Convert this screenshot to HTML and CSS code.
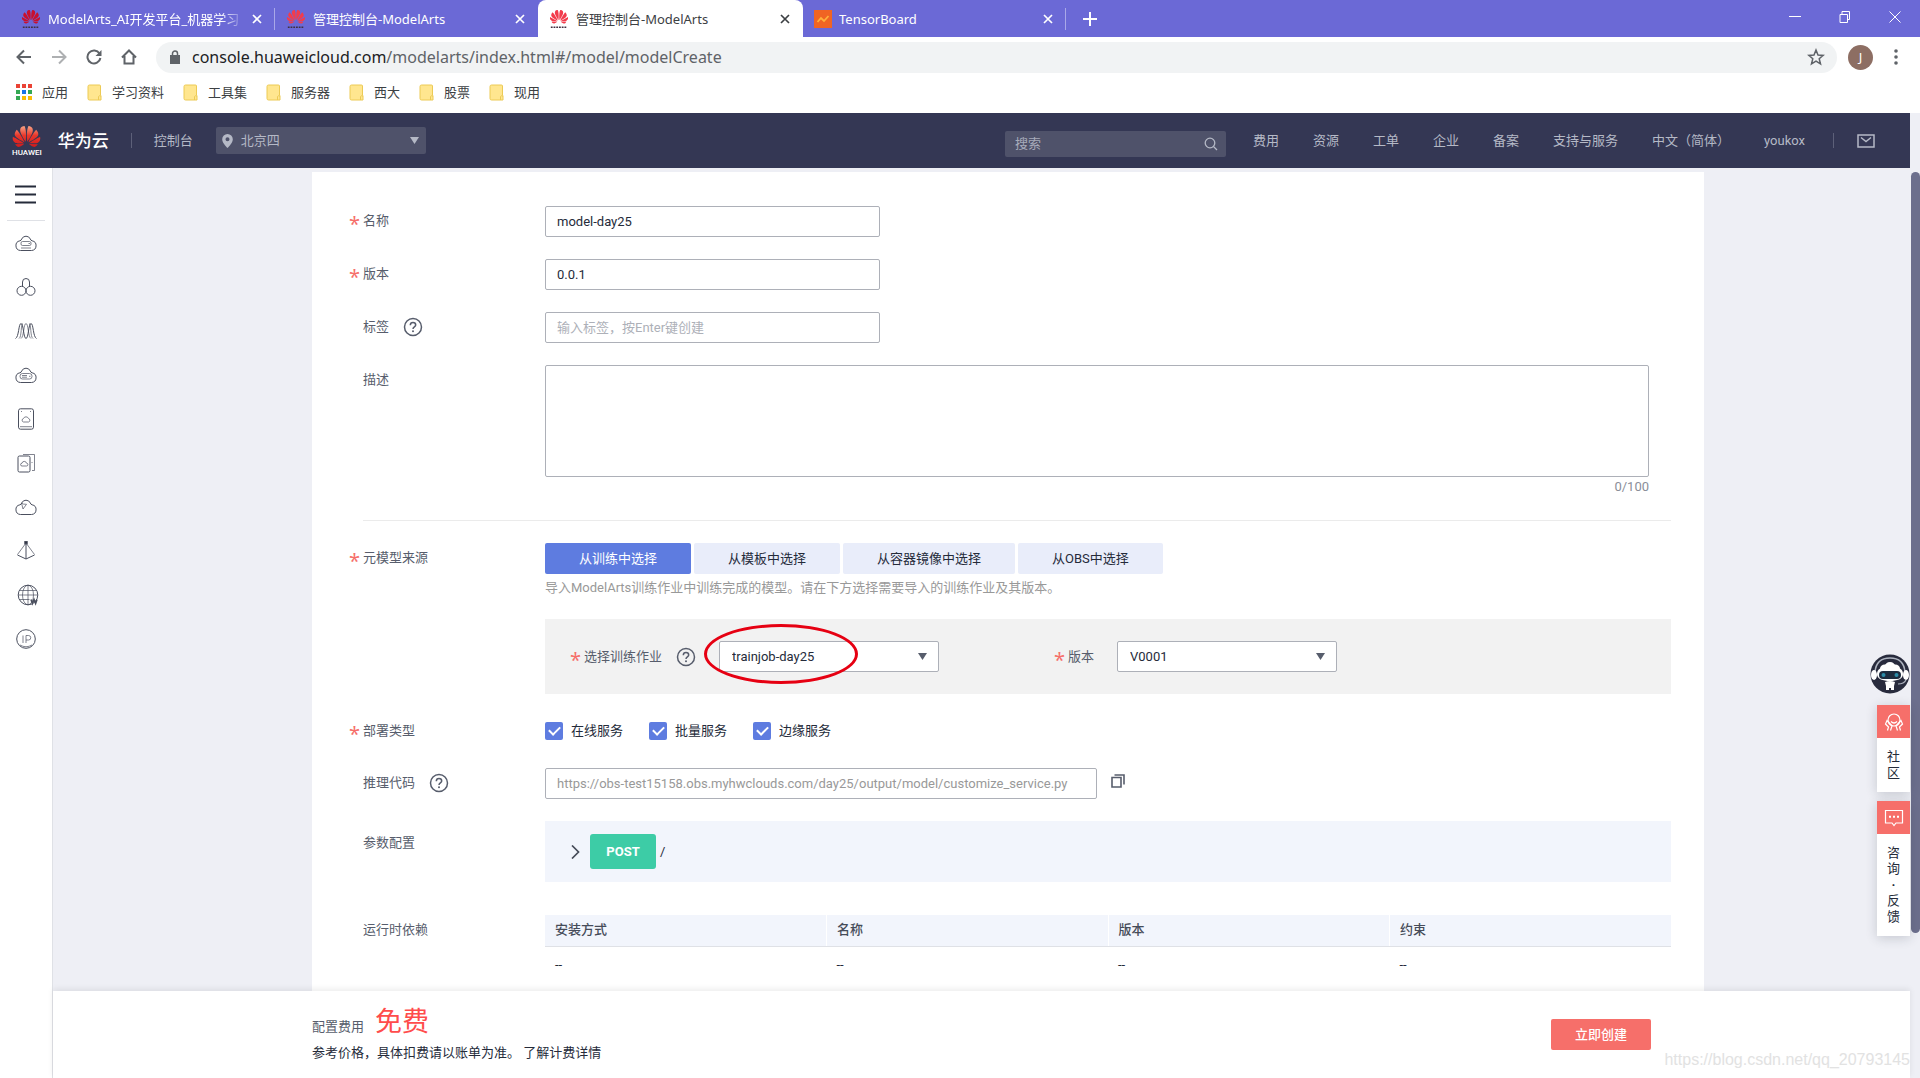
FILE: index.html
```html
<!DOCTYPE html>
<html lang="zh-CN">
<head>
<meta charset="utf-8">
<title>管理控制台-ModelArts</title>
<link rel="stylesheet" href="styles.css">
</head>
<body>
<svg class="sprite" aria-hidden="true">
  <defs>
    <linearGradient id="petal" x1="0" y1="0" x2="0" y2="1"><stop offset="0" stop-color="#f9a384"/><stop offset=".45" stop-color="#e8372b"/><stop offset="1" stop-color="#d41a1c"/></linearGradient>
  </defs>
  <symbol id="flower" viewBox="0 2 24 20"><path d="M3.67 6.14S1.82 7.91 1.72 9.78v.35c.08 1.51 1.22 2.4 1.22 2.4 1.83 1.79 6.26 4.04 7.3 4.55 0 0 .06.03.1-.01l.02-.04v-.04C7.52 10.8 3.67 6.14 3.67 6.14zM9.65 18.6c-.02-.08-.1-.08-.1-.08l-7.38.26c.8 1.43 2.15 2.53 3.56 2.2.96-.25 3.16-1.78 3.88-2.3.06-.05.04-.09.04-.09zm.08-.78C6.49 15.63.21 12.28.21 12.28c-.15.46-.2.9-.21 1.3v.07c0 1.07.4 1.82.4 1.82.8 1.69 2.34 2.2 2.34 2.2.7.3 1.4.31 1.4.31.12.02 4.4 0 5.54 0 .05 0 .08-.05.08-.05v-.06c0-.03-.03-.05-.03-.05zM9.06 3.19a3.42 3.42 0 00-2.57 3.15v.41c.03.6.16 1.05.16 1.05.66 2.9 3.86 7.65 4.55 8.65.05.05.1.03.1.03a.1.1 0 00.06-.1c1.06-10.6-1.11-13.42-1.11-13.42-.32.02-1.19.23-1.19.23zm8.3 2.27s-.49-1.8-2.44-2.28c0 0-.57-.14-1.17-.22 0 0-2.18 2.81-1.12 13.43.01.07.06.08.06.08.07.03.1-.03.1-.03.72-1.03 3.9-5.76 4.55-8.64 0 0 .36-1.4.02-2.34zm-2.92 13.07s-.07 0-.09.05c0 0-.01.07.03.1.7.51 2.85 2 3.88 2.3 0 0 .16.05.43.06h.14c.69-.02 1.9-.37 3-2.26l-7.4-.25zm7.83-8.41c.14-2.06-1.94-3.97-1.94-3.98 0 0-3.85 4.66-6.67 10.8 0 0-.03.08.02.13l.04.01h.06c1.06-.53 5.46-2.77 7.28-4.54 0 0 1.15-.93 1.21-2.42zm1.52 2.14s-6.28 3.37-9.52 5.55c0 0-.05.04-.03.11 0 0 .03.06.07.06 1.16 0 5.56 0 5.67-.02 0 0 .57-.02 1.27-.29 0 0 1.56-.5 2.37-2.27 0 0 .73-1.45.17-3.14z"/></symbol>
  <symbol id="favicon" viewBox="0 0 20 22"><use href="#flower" x="0" y="0" width="20" height="17"/><path d="M1 20h18" stroke="#403040" stroke-width="1.600" stroke-dasharray="2 1"/></symbol>
  <symbol id="cross" viewBox="0 0 10 10"><path d="M1 1l8 8M9 1l-8 8" stroke="currentColor" stroke-width="1.700" fill="none"/></symbol>
  <symbol id="folder" viewBox="0 0 15 17"><path d="M1 2.500a1.500 1.500 0 011.500-1.500h10a1 1 0 011 1v9.500h.5v4.500H2.500A1.500 1.500 0 011 14.500z" fill="#ffe68f" stroke="#ecca55"/><path d="M11.500 16v-3.500q1-1.500 2 0" fill="none" stroke="#ecca55"/></symbol>
  <symbol id="help" viewBox="0 0 20 20"><circle cx="10" cy="10" r="8.500" fill="none" stroke="#575d6c" stroke-width="1.500"/><path d="M7.300 8.200q0-2.700 2.700-2.700t2.700 2.400c0 1.900-2.700 1.900-2.700 4" fill="none" stroke="#575d6c" stroke-width="1.500"/><circle cx="10" cy="14.200" r="1" fill="#575d6c"/></symbol>
  <symbol id="cloud" viewBox="0 0 22 18"><path d="M5.500 16.500a4.900 4.900 0 01-.6-9.700C5.900 6.600 6.300 6 6.700 5a4.700 4.700 0 018.600 0c.4 1 .8 1.600 1.800 1.800a4.900 4.900 0 01-.6 9.700z"/></symbol>
</svg>

<div class="browser">
  <div class="tabstrip">
    <div class="tab tab-first">
      <svg class="fav fav-dark"><use href="#favicon"/></svg><span class="tab-title fade">ModelArts_AI开发平台_机器学习</span>
      <button class="tab-close" aria-label="关闭"><svg><use href="#cross"/></svg></button>
    </div>
    <div class="tab">
      <svg class="fav"><use href="#favicon"/></svg><span class="tab-title">管理控制台-ModelArts</span>
      <button class="tab-close" aria-label="关闭"><svg><use href="#cross"/></svg></button>
    </div>
    <div class="tab tab-active">
      <svg class="fav"><use href="#favicon"/></svg><span class="tab-title">管理控制台-ModelArts</span>
      <button class="tab-close" aria-label="关闭"><svg><use href="#cross"/></svg></button>
    </div>
    <div class="tab tab-last">
      <svg class="fav fav-board" viewBox="0 0 18 18"><path d="M0 0h18v18H0z" fill="#f06423"/><path d="M3.500 12l3.500-4 3 3 4.500-5" fill="none" stroke="#ffb03a" stroke-width="1.800"/></svg><span class="tab-title">TensorBoard</span>
      <button class="tab-close" aria-label="关闭"><svg><use href="#cross"/></svg></button>
    </div>
    <button class="new-tab" aria-label="新标签页"><svg viewBox="0 0 14 14"><path d="M7 0v14M0 7h14" stroke="#fff" stroke-width="2"/></svg></button>
    <div class="window-controls">
      <button aria-label="最小化"><svg viewBox="0 0 12 12"><path d="M0 5.500h12"/></svg></button>
      <button aria-label="还原"><svg viewBox="0 0 12 12"><path d="M1 3.500h7.500v8H1zM3 3.500v-3h7.500v8h-2"/></svg></button>
      <button aria-label="关闭窗口"><svg viewBox="0 0 12 12"><path d="M.5.500l11 11M11.500.500l-11 11"/></svg></button>
    </div>
  </div>
  <div class="toolbar">
    <button class="tool" aria-label="后退"><svg viewBox="0 0 16 16"><path d="M15 8H2M8 1.500L1.500 8 8 14.500" /></svg></button>
    <button class="tool off" aria-label="前进"><svg viewBox="0 0 16 16"><path d="M1 8h13M8 1.500L14.500 8 8 14.500"/></svg></button>
    <button class="tool" aria-label="刷新"><svg viewBox="0 0 16 16"><path d="M13.500 4.500A6.500 6.500 0 1014.400 9"/><path d="M15.500 1v6h-6z" fill="#5f6368" stroke="none"/></svg></button>
    <button class="tool" aria-label="主页"><svg viewBox="0 0 16 16"><path d="M1 8.500l7-7 7 7M3.500 7v7.500h9V7"/></svg></button>
    <label class="omnibox">
      <svg class="lock" viewBox="0 0 10 14"><path d="M0 5h10v9H0z" fill="#5f6368"/><path d="M2.500 5V3.500a2.500 2.500 0 015 0V5" fill="none" stroke="#5f6368" stroke-width="1.500"/></svg>
      <span class="url"><b>console.huaweicloud.com</b>/modelarts/index.html#/model/modelCreate</span>
      <svg class="star" viewBox="0 0 18 18"><path d="M9 2l2 5 5.200.4-4 3.400 1.300 5.200L9 13.200 4.500 16l1.300-5.200-4-3.400L7 7z" fill="none" stroke="#5f6368" stroke-width="1.500"/></svg>
    </label>
    <span class="avatar">J</span>
    <svg class="dots" viewBox="0 0 4 16" fill="#5f6368"><circle cx="2" cy="2" r="1.800"/><circle cx="2" cy="8" r="1.800"/><circle cx="2" cy="14" r="1.800"/></svg>
  </div>
  <nav class="bookmarks">
    <a href="#apps"><svg class="apps" viewBox="0 0 16 16"><path d="M0 0h4v4H0zM6 0h4v4H6zM12 0h4v4h-4z" fill="#ea4335"/><path d="M0 6h4v4H0zM12 6h4v4h-4zM0 12h4v4H0z" fill="#34a853"/><path d="M6 6h4v4H6z" fill="#1a73e8"/><path d="M6 12h4v4H6zM12 12h4v4h-4z" fill="#fbbc05"/></svg>应用</a>
    <a href="#b1"><svg class="folder"><use href="#folder"/></svg>学习资料</a>
    <a href="#b2"><svg class="folder"><use href="#folder"/></svg>工具集</a>
    <a href="#b3"><svg class="folder"><use href="#folder"/></svg>服务器</a>
    <a href="#b4"><svg class="folder"><use href="#folder"/></svg>西大</a>
    <a href="#b5"><svg class="folder"><use href="#folder"/></svg>股票</a>
    <a href="#b6"><svg class="folder"><use href="#folder"/></svg>现用</a>
  </nav>
</div>

<div class="viewport">
  <div class="page">
    <header class="topbar">
      <a class="brand" href="#home"><span class="logo"><svg class="logo-flower" fill="url(#petal)"><use href="#flower"/></svg><span class="logo-word">HUAWEI</span></span><span class="brand-name">华为云</span></a>
      <i class="bar"></i>
      <a class="console" href="#console">控制台</a>
      <div class="region">
        <svg class="pin" viewBox="0 0 11 14"><path fill-rule="evenodd" d="M5.500 0a5.300 5.300 0 015.300 5.300C10.800 8.500 7.500 12 5.500 14 3.500 12 .2 8.500.2 5.300A5.300 5.300 0 015.500 0zm0 3.300a2 2 0 100 4 2 2 0 000-4z"/></svg>
        <select aria-label="区域"><option>北京四</option></select>
        <svg class="caret" viewBox="0 0 9 7"><path d="M0 0h9L4.500 7z"/></svg>
      </div>
      <div class="search">
        <input type="text" placeholder="搜索" aria-label="搜索">
        <svg viewBox="0 0 14 14" fill="none" stroke="#b5b9c6" stroke-width="1.300"><circle cx="6" cy="6" r="4.800"/><path d="M9.500 9.500l3.500 3.500"/></svg>
      </div>
      <nav class="topnav">
        <a href="#1">费用</a><a href="#2">资源</a><a href="#3">工单</a><a href="#4">企业</a><a href="#5">备案</a><a href="#6">支持与服务</a><a href="#7">中文（简体）</a><a href="#8">youkox</a>
      </nav>
      <i class="bar"></i>
      <button class="mail" aria-label="消息"><svg viewBox="0 0 18 14"><path d="M1 1h16v12H1zM4 3.500l5 4 5-4" fill="none" stroke="#b5b9c6" stroke-width="1.500"/></svg></button>
    </header>

    <div class="body">
      <aside class="sidebar">
        <button class="menu" aria-label="菜单"><svg viewBox="0 0 21 19"><path d="M0 1.500h21M0 9.500h21M0 17.500h21" stroke="#252b3a" stroke-width="2"/></svg></button>
        <a href="#s1" aria-label="云服务器"><svg viewBox="0 0 22 22"><use href="#cloud" y="2" width="22" height="18"/><rect x="6" y="9.500" width="10" height="4" rx="1.500" class="thin"/><path d="M6 16h10M13.500 11.500h1.500" class="thin"/></svg></a>
        <a href="#s2" aria-label="集群"><svg viewBox="0 0 22 22"><path d="M7.500 10V6a3.500 3.500 0 017 0v4"/><circle cx="6.500" cy="14.800" r="4.500"/><circle cx="15.500" cy="14.800" r="4.500"/></svg></a>
        <a href="#s3" aria-label="伸缩"><svg viewBox="0 0 22 22"><path d="M.5 18.500C4 17 3.500 3.500 6 3.500S8.500 18.500 11 18.500 13.500 3.500 16 3.500 18 17 21.500 18.500"/><path d="M4 18.500C7 17 5.500 3.500 8 3.500M6 18.500C9 17 8.500 3.500 11 3.500S13 17 16 18.500M14 3.500c2.500 0 1 13.500 4 15" class="thin"/></svg></a>
        <a href="#s4" aria-label="裸金属"><svg viewBox="0 0 22 22"><use href="#cloud" y="2" width="22" height="18"/><rect x="5" y="9.500" width="12" height="5.500" rx="2.500" class="thin"/><path d="M7 11.500h5M7 13.200h5M14 12.300h1.500" class="thin"/></svg></a>
        <a href="#s5" aria-label="云硬盘"><svg viewBox="0 0 22 22"><rect x="3.500" y=".8" width="15" height="20.400" rx="2"/><path d="M5 18.700h12M6 3.500h1M15 3.500h1" class="thin"/><path d="M8.500 14h5a1.800 1.800 0 000-3.500 2.700 2.700 0 00-5 0 1.800 1.800 0 000 3.500z" class="thin"/></svg></a>
        <a href="#s6" aria-label="备份"><svg viewBox="0 0 22 22"><rect x="3" y="4" width="12" height="16" rx="1.500"/><path d="M8 2.500h11.500v16H17M16.500 10.500h1" class="thin"/><path d="M7 14h4.500a1.400 1.400 0 000-2.800 2.300 2.300 0 00-4.500 0 1.400 1.400 0 000 2.800z" class="thin"/></svg></a>
        <a href="#s7" aria-label="对象存储"><svg viewBox="0 0 22 22"><use href="#cloud" y="2" width="22" height="18"/><path d="M6.500 7q1 1.500 5 1.300L8 13z" class="thin"/></svg></a>
        <a href="#s8" aria-label="网络"><svg viewBox="0 0 22 22"><path d="M2.500 14.500L11 3l8.500 11.500" class="thin"/><path d="M11 3v16M2.500 15l8.500 4 8.500-4"/><rect x="9.800" y="1.500" width="2.400" height="2.400" fill="#252b3a"/></svg></a>
        <a class="web" href="#s9" aria-label="域名"><svg viewBox="0 0 22 22"><circle cx="11" cy="11" r="9.800"/><ellipse cx="11" cy="11" rx="5.500" ry="9.800" class="thin"/><path d="M11 1.200v19.600M1.500 11h19M2.500 6.500h17M2.500 15.500h10" class="thin"/><path d="M14 15.500l1.400 4 1.600-4 1.600 4 1.400-4" stroke-width="1.600"/></svg></a>
        <a href="#s10" aria-label="弹性公网"><svg viewBox="0 0 22 22"><circle cx="11" cy="11" r="9.300"/><path d="M8 7.500v7.500M11 15V7.500h2.500a2 2 0 010 4.500H11M5 17q6 3.500 12 0" class="thin"/></svg></a>
      </aside>

      <div class="main">
        <div class="scroll">
          <form class="card">
            <div class="row"><label class="label req" for="name">名称</label><input class="field short" id="name" type="text" value="model-day25"></div>
            <div class="row"><label class="label req" for="ver">版本</label><input class="field short" id="ver" type="text" value="0.0.1"></div>
            <div class="row"><label class="label" for="tag">标签<svg class="help"><use href="#help"/></svg></label><input class="field short" id="tag" type="text" placeholder="输入标签，按Enter键创建"></div>
            <div class="row"><label class="label" for="desc">描述</label><div class="desc"><textarea class="field area" id="desc"></textarea><span class="count">0/100</span></div></div>
            <hr>
            <div class="row">
              <span class="label req">元模型来源</span>
              <div>
                <div class="segments"><button type="button" class="on">从训练中选择</button><button type="button">从模板中选择</button><button type="button">从容器镜像中选择</button><button type="button">从OBS中选择</button></div>
                <p class="hint">导入ModelArts训练作业中训练完成的模型。请在下方选择需要导入的训练作业及其版本。</p>
                <div class="job">
                  <label class="label req" for="job">选择训练作业<svg class="help"><use href="#help"/></svg></label>
                  <div class="select"><select class="field" id="job"><option>trainjob-day25</option></select><svg class="caret" viewBox="0 0 9 7"><path d="M0 0h9L4.500 7z"/></svg><i class="ring"></i></div>
                  <label class="label req second" for="jobver">版本</label>
                  <div class="select"><select class="field" id="jobver"><option>V0001</option></select><svg class="caret" viewBox="0 0 9 7"><path d="M0 0h9L4.500 7z"/></svg></div>
                </div>
              </div>
            </div>
            <div class="row">
              <span class="label req">部署类型</span>
              <div class="checks"><label><input type="checkbox" checked>在线服务</label><label><input type="checkbox" checked>批量服务</label><label><input type="checkbox" checked>边缘服务</label></div>
            </div>
            <div class="row">
              <label class="label" for="code">推理代码<svg class="help"><use href="#help"/></svg></label>
              <div class="code"><input class="field" id="code" type="text" readonly value="https://obs-test15158.obs.myhwclouds.com/day25/output/model/customize_service.py"><button type="button" class="copy" aria-label="复制"><svg viewBox="0 0 14 14"><path d="M1 3.500h9V13H1zM3.500 1H13v9.500" fill="none" stroke="#575d6c" stroke-width="1.600"/></svg></button></div>
            </div>
            <div class="row">
              <span class="label low">参数配置</span>
              <div class="params"><svg viewBox="0 0 9 14"><path d="M1 .5L7.500 7 1 13.500" fill="none" stroke="#464c59" stroke-width="1.700"/></svg><button type="button" class="post">POST</button><span>/</span></div>
            </div>
            <div class="row deps">
              <span class="label">运行时依赖</span>
              <table>
                <thead><tr><th>安装方式</th><th>名称</th><th>版本</th><th>约束</th></tr></thead>
                <tbody><tr><td>--</td><td>--</td><td>--</td><td>--</td></tr></tbody>
              </table>
            </div>
          </form>
        </div>
        <footer class="footer">
          <div>
            <div class="price">配置费用 <strong>免费</strong></div>
            <div class="note">参考价格，具体扣费请以账单为准。 <a href="#price">了解计费详情</a></div>
          </div>
          <button class="create">立即创建</button>
          <span class="mark">https://blog.csdn.net/qq_20793145</span>
        </footer>
      </div>
    </div>

    <div class="floats">
      <svg class="robot" viewBox="0 0 40 40"><circle cx="20" cy="20" r="19.500" fill="#282b3d"/><path d="M5 18C6 7 13 4 20 4s14 3 15 14" fill="none" stroke="#aeb4c0" stroke-width="1.500"/><path d="M20 8c3 0 4 2 5 2.500 3 0 5 2 5 4 2 1 3 3 3 5.500 0 5-6 7-13 7S7 25 7 20c0-2.500 1-4.500 3-5.500 0-2 2-4 5-4 1-.5 2-2.500 5-2.500z" fill="#fff"/><ellipse cx="4" cy="21" rx="3" ry="5" fill="#fff"/><ellipse cx="36" cy="21" rx="3" ry="5" fill="#fff"/><rect x="9" y="17" width="22" height="8" rx="4" fill="#1d2c3e"/><circle cx="13.500" cy="21" r="2" fill="#2c8ca8"/><circle cx="26.500" cy="21" r="2" fill="#2c8ca8"/><path d="M15 28q5-2 10 0l-1 4v4h-3v-2h-2v2h-3v-4z" fill="#fff"/><path d="M36 26q-2 4-8 4" fill="none" stroke="#aeb4c0" stroke-width="1.200"/></svg>
      <a class="float" href="#community"><span class="float-icon"><svg viewBox="0 0 20 18"><circle cx="10" cy="7" r="6"/><path d="M7 8.500q3 3 6 0M4.500 9L3 7.500 1.500 11l3 3-1 3.500M15.500 9L17 7.500l1.500 3.500-3 3 1 3.500M4.500 9l3.500 4-1.500 4.500M15.500 9L12 13l1.500 4.500"/></svg></span><span class="float-text">社<br>区</span></a>
      <a class="float" href="#feedback"><span class="float-icon"><svg viewBox="0 0 20 18"><path d="M1.500 1.500h17v12.500H12l-2 2.500L8 14H1.500z"/><path d="M5 7.800h2M9 7.800h2M13 7.800h2" stroke-width="2"/></svg></span><span class="float-text">咨<br>询<br><b>·</b><br>反<br>馈</span></a>
    </div>
  </div>
  <div class="scrollbar"><i></i></div>
</div>
</body>
</html>
```

FILE: styles.css
```css
* { box-sizing: border-box; }
body {
  margin: 0;
  min-height: 100vh;
  display: flex;
  flex-direction: column;
  font: 13px/20px Roboto, "Noto Sans CJK SC", sans-serif;
  color: #252b3a;
  background: #eeeff5;
}
button, input, select, textarea { font: inherit; color: inherit; }
button { border: 0; padding: 0; background: none; }
a { color: inherit; text-decoration: none; }
svg { display: block; flex: none; }
.sprite { position: absolute; width: 0; height: 0; }

/* browser frame */
.browser { background: #fff; font-family: "Noto Sans", "Noto Sans CJK SC", sans-serif; }
.tabstrip { display: flex; align-items: stretch; height: 37px; background: #6b69d6; color: #fff; }
.tab { display: flex; align-items: center; width: 263px; padding: 0 13px 0 11px; gap: 7px; }
.tab-first { width: 275px; padding-left: 21px; background: linear-gradient(#a9a8e8, #a9a8e8) right / 1px 22px no-repeat; }
.tab-active { width: 265px; color: #3c4043; background: #fff; border-radius: 8px 8px 0 0; }
.tab-last { background: linear-gradient(#a9a8e8, #a9a8e8) right / 1px 22px no-repeat; }
.fav { width: 20px; height: 20px; fill: #f23c4c; }
.fav-dark { fill: #c8102e; }
.fav-board { width: 18px; height: 18px; }
.tab-title { flex: 1; overflow: hidden; white-space: nowrap; }
.fade { -webkit-mask-image: linear-gradient(90deg, #000 88%, transparent); mask-image: linear-gradient(90deg, #000 88%, transparent); }
.tab-close svg { width: 10px; height: 10px; }
.new-tab { margin-left: 17px; }
.new-tab svg { width: 14px; height: 14px; }
.window-controls { display: flex; gap: 38px; margin-left: auto; padding: 0 19px 4px 0; }
.window-controls svg { width: 12px; height: 12px; fill: none; stroke: #fff; stroke-width: 1; }
.toolbar { display: flex; align-items: center; height: 40px; padding: 0 22px 0 16px; }
.tool { margin-right: 19px; }
.tool svg { width: 16px; height: 16px; fill: none; stroke: #5f6368; stroke-width: 2; }
.tool.off { opacity: .5; }
.omnibox { display: flex; flex: 1; align-items: center; height: 31px; margin-right: 11px; padding: 0 12px 0 14px; border-radius: 16px; background: #f1f3f4; }
.lock { width: 10px; height: 14px; margin-right: 12px; }
.url { flex: 1; font-size: 16px; color: #5f6368; }
.url b { font-weight: 400; color: #202124; }
.star { width: 18px; height: 18px; }
.avatar { width: 25px; height: 25px; border-radius: 50%; background: #8d6e63; color: #fff; line-height: 25px; text-align: center; }
.dots { width: 4px; height: 16px; margin-left: 21px; }
.bookmarks { display: flex; gap: 19px; height: 36px; padding: 0 16px 6px; align-items: center; color: #3c4043; }
.bookmarks a { display: flex; align-items: center; gap: 10px; }
.apps { width: 16px; height: 16px; }
.folder { width: 15px; height: 17px; }

/* console shell */
.viewport { display: flex; flex: 1; }
.page { position: relative; display: flex; flex: 1; flex-direction: column; min-width: 0; }
.scrollbar { width: 10px; padding: 59px 0 0 1px; background: #eeeff5; }
.scrollbar i { display: block; height: 84%; border-radius: 5px; background: #6c6f8d; }
.topbar { display: flex; align-items: center; height: 55px; padding: 0 35px 0 12px; background: #343754; color: #b5b9c6; }
.brand { display: flex; align-items: center; gap: 16px; color: #fff; }
.logo { display: flex; flex-direction: column; align-items: center; }
.logo-flower { width: 29px; height: 23px; }
.logo-word { font-size: 8px; line-height: 9px; font-weight: 500; }
.brand-name { font-size: 17px; font-weight: 500; }
.bar { width: 1px; height: 15px; background: #5d6079; }
.brand + .bar { margin: 0 22px; }
.region, .search { display: grid; align-items: center; background: #4f526a; border-radius: 2px; }
.region > *, .search > * { grid-area: 1 / 1; }
.region { width: 210px; margin-left: 23px; }
.region select { appearance: none; width: 100%; height: 27px; padding: 0 25px; border: 0; background: none; }
.pin { width: 11px; height: 14px; margin-left: 6px; fill: #b5b9c6; }
.caret { width: 9px; height: 7px; margin-right: 12px; justify-self: end; fill: #575d6c; pointer-events: none; }
.region .caret { margin-right: 7px; fill: #b5b9c6; }
.search { width: 221px; margin: 6px 27px 0 auto; }
.search input { width: 100%; height: 26px; padding: 0 10px; border: 0; background: none; }
.search input::placeholder { color: #a7abba; opacity: 1; }
.search svg { width: 14px; height: 14px; margin-right: 8px; justify-self: end; }
.topnav { display: flex; gap: 34px; margin-right: 28px; }
.mail { margin-left: 23px; }
.mail svg { width: 18px; height: 14px; }

.body { display: flex; flex: 1; }
.sidebar { display: flex; flex-direction: column; align-items: center; width: 53px; padding-right: 1px; border-right: 1px solid #dfe1e6; background: #fff; }
.menu { width: 38px; height: 53px; border-bottom: 1px solid #dfe1e6; display: grid; place-items: center; }
.menu svg { width: 21px; height: 19px; }
.sidebar a { display: grid; align-items: center; height: 44px; fill: none; stroke: #4a4f5e; }
.sidebar a svg { width: 22px; height: 22px; }
.sidebar .thin { stroke-width: .7; }
.sidebar .web { padding-left: 5px; }

.main { display: flex; flex: 1; flex-direction: column; min-width: 0; }
.scroll { flex: 1; display: flex; padding: 4px 206px 0 259px; }
.card { flex: 1; min-width: 0; display: flex; flex-direction: column; gap: 22px; padding: 34px 33px 0 51px; background: #fff; }
.row { display: grid; grid-template-columns: 182px minmax(0, 1fr); align-items: start; }
.label { display: flex; align-items: center; line-height: 29px; color: #575d6c; }
.req::before { content: "*"; width: 14px; margin-left: -14px; font: 20px/20px "Noto Sans", sans-serif; color: #f66f6a; padding-top: 7px; height: 20px; }
.help { width: 20px; height: 20px; margin-left: 14px; }
.field { height: 31px; padding: 0 11px; border: 1px solid #adb0b8; border-radius: 2px; background: #fff; }
.field::placeholder { color: #adb0b8; opacity: 1; }
.short { width: 335px; }
.desc { display: flex; flex-direction: column; padding-right: 22px; }
.area { height: 112px; resize: none; }
.count { text-align: right; color: #8a8e99; }
hr { width: 100%; height: 1px; margin: 1px 0 0; border: 0; background: #ebebeb; }
.segments { display: flex; gap: 3px; }
.segments button { height: 31px; padding: 0 34px; background: #e9edfa; border-radius: 2px; }
.segments .on { background: #5e7ce0; color: #fff; }
.hint { margin: 4px 0 21px; color: #999; }
.job { display: flex; align-items: center; height: 75px; padding-left: 39px; background: #f2f2f2; }
.select { position: relative; display: grid; align-items: center; width: 220px; margin-left: 23px; }
.select > .field, .select > .caret { grid-area: 1 / 1; }
.select .field { appearance: none; width: 100%; padding: 0 12px; }
.second { margin-left: 129px; }
.ring { position: absolute; left: -15px; top: -17px; width: 154px; height: 60px; border: 3px solid #e60012; border-radius: 50%; pointer-events: none; }
.checks { display: flex; gap: 26px; line-height: 30px; }
.checks label { display: flex; align-items: center; gap: 8px; }
.checks input { appearance: none; width: 18px; height: 18px; margin: 0; border-radius: 2px; background: #5e7ce0; display: grid; place-items: center; }
.checks input:checked::before { content: ""; width: 9px; height: 5px; margin-bottom: 3px; border: solid #fff; border-width: 0 0 2px 2px; transform: rotate(-45deg); }
.code { display: flex; align-items: center; gap: 14px; }
.code .field { width: 552px; color: #999; }
.copy { padding-bottom: 5px; }
.copy svg { width: 14px; height: 14px; }
.low { padding-top: 7px; }
.params { display: flex; align-items: center; height: 61px; padding-left: 26px; background: #f2f5fc; }
.params svg { width: 9px; height: 14px; }
.post { width: 66px; height: 35px; margin: 0 4px 0 10px; border-radius: 3px; background: #3dcca6; color: #fff; font-weight: 700; }
.deps { margin-top: 11px; }
table { width: 100%; border-collapse: collapse; table-layout: fixed; }
th, td { padding: 0 10px; height: 31px; text-align: left; font-weight: 400; }
th { font-weight: 500; color: #464c59; background: #f2f5fc; border-bottom: 1px solid #dfe1e6; }
th + th { border-left: 1px solid #fff; }
td { height: 37px; }

.footer { position: relative; z-index: 1; display: flex; align-items: center; justify-content: space-between; height: 87px; padding: 0 259px; background: #fff; box-shadow: 0 -2px 6px rgba(0, 0, 0, .08); }
.price { display: flex; align-items: baseline; gap: 11px; line-height: 32px; color: #575d6c; }
.price strong { font-size: 27px; font-weight: 400; color: #ff4c4c; }
.create { width: 100px; height: 31px; border-radius: 2px; background: #f66f6a; color: #fff; font-weight: 500; }
.mark { position: absolute; right: 0; bottom: 8px; font: 16px/20px "Liberation Sans", sans-serif; color: #e2e2e2; }

.floats { position: absolute; right: 0; top: 541px; z-index: 2; display: flex; flex-direction: column; align-items: flex-end; }
.robot { width: 40px; height: 40px; margin-bottom: 11px; }
.float { width: 33px; margin-bottom: 9px; background: #fff; box-shadow: 0 2px 12px rgba(37, 43, 58, .2); text-align: center; }
.float-icon { display: grid; place-items: center; height: 33px; background: #f66f6a; }
.float-icon svg { width: 20px; height: 18px; fill: none; stroke: #fff; stroke-width: 1.2; }
.float-text { display: block; padding: 11px 0; line-height: 16px; }
```
